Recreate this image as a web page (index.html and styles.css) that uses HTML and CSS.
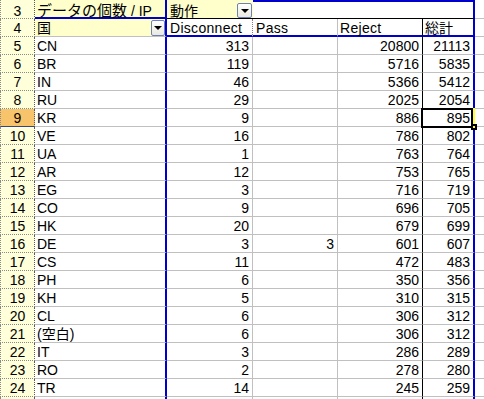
FILE: index.html
```html
<!DOCTYPE html>
<html lang="ja">
<head>
<meta charset="utf-8">
<title>Pivot</title>
<link rel="stylesheet" href="styles.css">
</head>
<body>
<div class="sheet">
  <div class="rh top">3</div>
  <div class="cell ca yel a3 top"><span class="jp15">データの個数</span> / IP</div>
  <div class="cell cb yel b3 top"><span>動作</span><span class="dd small"></span></div>
  <div class="cell t3 c3"></div>
  <div class="cell t3 d3"></div>
  <div class="cell ce t3"></div>
  <div class="cell cf"></div>

  <div class="rh">4</div>
  <div class="cell ca yel a4"><span>国</span><span class="dd"></span></div>
  <div class="cell cb h4 b4 wide">Disconnect</div>
  <div class="cell cc h4 wide">Pass</div>
  <div class="cell cd h4 wide">Reject</div>
  <div class="cell ce h4">総計</div>
  <div class="cell cf"></div>

  <div class="rh">5</div><div class="cell ca">CN</div><div class="cell cb num">313</div><div class="cell cc num"></div><div class="cell cd num">20800</div><div class="cell ce num">21113</div><div class="cell cf"></div>
  <div class="rh">6</div><div class="cell ca">BR</div><div class="cell cb num">119</div><div class="cell cc num"></div><div class="cell cd num">5716</div><div class="cell ce num">5835</div><div class="cell cf"></div>
  <div class="rh">7</div><div class="cell ca">IN</div><div class="cell cb num">46</div><div class="cell cc num"></div><div class="cell cd num">5366</div><div class="cell ce num">5412</div><div class="cell cf"></div>
  <div class="rh">8</div><div class="cell ca">RU</div><div class="cell cb num">29</div><div class="cell cc num"></div><div class="cell cd num">2025</div><div class="cell ce num">2054</div><div class="cell cf"></div>
  <div class="rh sel">9</div><div class="cell ca">KR</div><div class="cell cb num">9</div><div class="cell cc num"></div><div class="cell cd num">886</div><div class="cell ce num">895</div><div class="cell cf"></div>
  <div class="rh">10</div><div class="cell ca">VE</div><div class="cell cb num">16</div><div class="cell cc num"></div><div class="cell cd num">786</div><div class="cell ce num">802</div><div class="cell cf"></div>
  <div class="rh">11</div><div class="cell ca">UA</div><div class="cell cb num">1</div><div class="cell cc num"></div><div class="cell cd num">763</div><div class="cell ce num">764</div><div class="cell cf"></div>
  <div class="rh">12</div><div class="cell ca">AR</div><div class="cell cb num">12</div><div class="cell cc num"></div><div class="cell cd num">753</div><div class="cell ce num">765</div><div class="cell cf"></div>
  <div class="rh">13</div><div class="cell ca">EG</div><div class="cell cb num">3</div><div class="cell cc num"></div><div class="cell cd num">716</div><div class="cell ce num">719</div><div class="cell cf"></div>
  <div class="rh">14</div><div class="cell ca">CO</div><div class="cell cb num">9</div><div class="cell cc num"></div><div class="cell cd num">696</div><div class="cell ce num">705</div><div class="cell cf"></div>
  <div class="rh">15</div><div class="cell ca">HK</div><div class="cell cb num">20</div><div class="cell cc num"></div><div class="cell cd num">679</div><div class="cell ce num">699</div><div class="cell cf"></div>
  <div class="rh">16</div><div class="cell ca">DE</div><div class="cell cb num">3</div><div class="cell cc num">3</div><div class="cell cd num">601</div><div class="cell ce num">607</div><div class="cell cf"></div>
  <div class="rh">17</div><div class="cell ca">CS</div><div class="cell cb num">11</div><div class="cell cc num"></div><div class="cell cd num">472</div><div class="cell ce num">483</div><div class="cell cf"></div>
  <div class="rh">18</div><div class="cell ca">PH</div><div class="cell cb num">6</div><div class="cell cc num"></div><div class="cell cd num">350</div><div class="cell ce num">356</div><div class="cell cf"></div>
  <div class="rh">19</div><div class="cell ca">KH</div><div class="cell cb num">5</div><div class="cell cc num"></div><div class="cell cd num">310</div><div class="cell ce num">315</div><div class="cell cf"></div>
  <div class="rh">20</div><div class="cell ca">CL</div><div class="cell cb num">6</div><div class="cell cc num"></div><div class="cell cd num">306</div><div class="cell ce num">312</div><div class="cell cf"></div>
  <div class="rh">21</div><div class="cell ca">(空白)</div><div class="cell cb num">6</div><div class="cell cc num"></div><div class="cell cd num">306</div><div class="cell ce num">312</div><div class="cell cf"></div>
  <div class="rh">22</div><div class="cell ca">IT</div><div class="cell cb num">3</div><div class="cell cc num"></div><div class="cell cd num">286</div><div class="cell ce num">289</div><div class="cell cf"></div>
  <div class="rh">23</div><div class="cell ca">RO</div><div class="cell cb num">2</div><div class="cell cc num"></div><div class="cell cd num">278</div><div class="cell ce num">280</div><div class="cell cf"></div>
  <div class="rh">24</div><div class="cell ca">TR</div><div class="cell cb num">14</div><div class="cell cc num"></div><div class="cell cd num">245</div><div class="cell ce num">259</div><div class="cell cf"></div>
  <div class="rh"></div><div class="cell ca"></div><div class="cell cb num"></div><div class="cell cc num"></div><div class="cell cd num"></div><div class="cell ce num"></div><div class="cell cf"></div>

  <div class="selbox"></div>
  <div class="selmark"></div>
  <div class="handle"></div>
</div>
</body>
</html>
```

FILE: styles.css
```css
* { box-sizing: border-box; }
html, body { margin: 0; padding: 0; }
body {
  width: 484px;
  height: 399px;
  overflow: hidden;
  background: #fff;
  color: #000;
  font-family: "Liberation Sans", "Noto Sans CJK JP", sans-serif;
  font-size: 14px;
}
.sheet {
  --blue: #0000cc;
  position: relative;
  width: 484px;
  display: grid;
  grid-template-columns: 35px 132px 86px 85px 85px 52px 1fr;
  grid-template-rows: 19px;
  grid-auto-rows: 18px;
}
.rh {
  background: #ffffd9;
  text-align: center;
  line-height: 16px;
  padding-top: 1px;
  border-left: 1px dotted #8a8a8a;
  border-right: 1px dotted #5a5a5a;
  border-bottom: 1px dotted #8a8a8a;
  white-space: nowrap;
}
.rh.sel {
  background: #f8c46b;
  border-bottom: 1px solid #35457e;
}
.cell {
  line-height: 16px;
  padding: 1px 3px 0 2px;
  border-right: 1px solid #c0c0c0;
  border-bottom: 1px solid #c0c0c0;
  white-space: nowrap;
}
.top { padding-top: 3px; }
.num { text-align: right; }
.wide { letter-spacing: 0.3px; }
.ca { border-right: 2px solid var(--blue); }
.cb, .cc { padding-left: 3px; }
.cd { border-right-color: #000; }
.ce { border-right: 2px solid var(--blue); }
.cf { border-right: 0; }
.yel { background: #ffffcc; }
.jp15 { font-size: 15px; }

.a3 { border-bottom: 2px solid var(--blue); }
.b3 {
  display: flex;
  border-right: 0;
  border-bottom-color: #000;
  padding-right: 1px;
}
.t3 {
  border-top: 2px solid var(--blue);
  border-bottom-color: #000;
}
.c3, .d3 { border-right: 0; }
.a4 {
  display: flex;
  padding-right: 0;
}
.h4 { border-bottom: 2px solid var(--blue); }
.b4 { border-right: 1px dotted #808080; }

.dd {
  flex: none;
  margin-left: auto;
  align-self: flex-end;
  width: 14px;
  height: 16px;
  border: 1px solid #6f82ae;
  border-radius: 2px;
  background: linear-gradient(#ffffff, #e9e8e1);
  display: flex;
  align-items: center;
  justify-content: center;
}
.dd.small { width: 15px; height: 15px; }
.dd::after {
  content: "";
  border-left: 4px solid transparent;
  border-right: 4px solid transparent;
  border-top: 4px solid #000;
}

.selbox {
  position: absolute;
  left: 421px;
  top: 108px;
  width: 52px;
  height: 20px;
  border: 2px solid #000;
}
.selmark {
  position: absolute;
  left: 473px;
  top: 108px;
  width: 2px;
  height: 16px;
  background: #ffff33;
}
.handle {
  position: absolute;
  left: 471px;
  top: 124px;
  width: 6px;
  height: 6px;
  border: 2px solid #000;
  background: #ffff33;
}
```
